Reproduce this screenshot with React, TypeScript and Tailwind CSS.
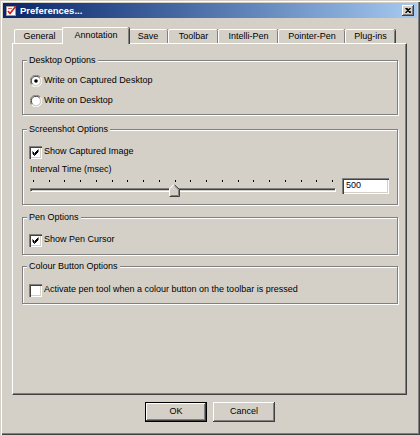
import React from "react";

const FONT = { fontFamily: '"Liberation Sans", Arial, sans-serif' };

function Radio({ checked }: { checked?: boolean }) {
  return (
    <svg width="12" height="12" viewBox="0 0 12 12" className="shrink-0">
      <path d="M10.5 2.2 A5 5 0 0 0 1.5 9.8" fill="none" stroke="#808080" strokeWidth="1" />
      <path d="M9.6 3 A3.9 3.9 0 0 0 2.4 9" fill="none" stroke="#404040" strokeWidth="1" />
      <path d="M1.5 9.8 A5 5 0 0 0 10.5 2.2" fill="none" stroke="#ffffff" strokeWidth="1" />
      <circle cx="6" cy="6" r="3.9" fill="#ffffff" />
      {checked && <circle cx="6" cy="6" r="1.8" fill="#000000" />}
    </svg>
  );
}

function Check({ checked }: { checked?: boolean }) {
  return (
    <div className="w-[13px] h-[13px] shrink-0 bg-white shadow-[inset_1px_1px_0_#808080,inset_2px_2px_0_#404040,inset_-1px_-1px_0_#ffffff,inset_-2px_-2px_0_#d4d0c8] flex items-center justify-center">
      {checked && (
        <svg width="7" height="7" viewBox="0 0 7 7">
          <path d="M0.5 2.5 L2.5 4.5 L6.5 0.5 M0.5 3.5 L2.5 5.5 L6.5 1.5 M0.5 4.5 L2.5 6.5 L6.5 2.5" stroke="#000" strokeWidth="1" fill="none" />
        </svg>
      )}
    </div>
  );
}

function Group({
  title,
  className,
  children,
}: {
  title: string;
  className: string;
  children?: React.ReactNode;
}) {
  return (
    <div
      className={
        "relative ml-[9px] w-[376px] border border-[#808080] shadow-[inset_1px_1px_0_#ffffff,1px_1px_0_#ffffff] " +
        className
      }
    >
      <span className="absolute -top-[7px] left-[4px] px-[2px] bg-[#d4d0c8] leading-[12px] text-[9px] text-black">
        {title}
      </span>
      {children}
    </div>
  );
}

const tabs = [
  { label: "General", w: "w-[50px]" },
  { label: "Annotation", w: "w-[63px]", active: true },
  { label: "Save", w: "w-[41px]" },
  { label: "Toolbar", w: "w-[50px]" },
  { label: "Intelli-Pen", w: "w-[60px]" },
  { label: "Pointer-Pen", w: "w-[67px]" },
  { label: "Plug-ins", w: "w-[50px]" },
];

export default function App() {
  const ticks = Array.from({ length: 20 }, (_, i) => 3 + i * 15.74);
  return (
    <div
      className="w-[420px] h-[435px] bg-[#d4d0c8] p-[3px] flex flex-col shadow-[inset_1px_1px_0_#d4d0c8,inset_2px_2px_0_#ffffff,inset_-1px_-1px_0_#404040,inset_-2px_-2px_0_#808080] text-black"
      style={FONT}
    >
      {/* Title bar */}
      <div className="h-[15px] flex items-center bg-gradient-to-r from-[#0a246a] to-[#a6caf0] pl-[3px] pr-[3px]">
        <svg width="11" height="11" viewBox="0 0 11 11" className="shrink-0">
          <rect x="0.5" y="1.5" width="9" height="9" fill="#ffffff" stroke="#9a9a9a" />
          <path d="M2 6 L4 8.5 L10 1" stroke="#d01818" strokeWidth="1.6" fill="none" />
          <path d="M2 3.5 H6" stroke="#e06060" strokeWidth="1" />
        </svg>
        <span className="ml-[3px] text-white font-bold text-[9.5px] leading-none">Preferences...</span>
        <div className="ml-auto w-[12px] h-[11px] bg-[#d4d0c8] shadow-[inset_-1px_-1px_0_#404040,inset_1px_1px_0_#ffffff,inset_-2px_-2px_0_#808080] flex items-center justify-center">
          <svg width="6" height="5" viewBox="0 0 6 5">
            <path d="M0.5 0 L5.5 5 M5.5 0 L0.5 5 M1.5 0 L6 4.5" stroke="#000" strokeWidth="1.2" fill="none" />
          </svg>
        </div>
      </div>

      {/* Tabs */}
      <div className="relative z-10 mt-[9px] ml-[9px] pl-[2px] h-[16px] flex items-end">
        {tabs.map((t) =>
          t.active ? (
            <div
              key={t.label}
              className={
                "relative z-10 -mx-[2px] -mb-[1px] h-[17px] w-[67px] bg-[#d4d0c8] rounded-t-[2px] border-t border-l border-white shadow-[inset_-1px_0_0_#808080,1px_0_0_#404040] flex items-center justify-center text-[9px] pb-[1px]"
              }
            >
              {t.label}
            </div>
          ) : (
            <div
              key={t.label}
              className={
                t.w +
                " h-[14px] bg-[#d4d0c8] rounded-t-[2px] border-t border-l border-white shadow-[inset_-1px_0_0_#808080,1px_0_0_#404040] flex items-center justify-center text-[9px] pt-[1px]"
              }
            >
              {t.label}
            </div>
          )
        )}
      </div>

      {/* Panel */}
      <div className="ml-[9px] w-[395px] h-[352px] border-l border-t border-white border-r border-b border-r-[#404040] border-b-[#404040] shadow-[inset_-1px_-1px_0_#808080] flex flex-col pt-[16px] text-[9px]">
        <Group title="Desktop Options" className="h-[55px] pt-[13px] pl-[7px]">
          <div className="h-[14px] flex items-center gap-[2px]">
            <Radio checked />
            <span>Write on Captured Desktop</span>
          </div>
          <div className="mt-[6px] h-[14px] flex items-center gap-[2px]">
            <Radio />
            <span>Write on Desktop</span>
          </div>
        </Group>

        <Group title="Screenshot Options" className="mt-[14px] h-[76px] pt-[15px] pl-[6px]">
          <div className="h-[14px] flex items-center gap-[2px]">
            <Check checked />
            <span>Show Captured Image</span>
          </div>
          <div className="mt-[4px] h-[14px] flex items-center pl-[1px]">Interval Time (msec)</div>
          <div className="mt-[2px] h-[18px] flex items-start">
            <div className="relative w-[306px] h-[18px] ml-[1px]">
              {ticks.map((x, i) => (
                <div
                  key={i}
                  className="absolute top-[1px] w-[1px] h-[2px] bg-[#000000]"
                  style={{ left: Math.round(x) }}
                />
              ))}
              <div className="absolute left-0 right-0 top-[9px] h-[4px] border-t border-l border-[#808080] border-b border-r border-b-white border-r-white shadow-[inset_1px_1px_0_#404040]" />
              <svg
                width="11"
                height="13"
                viewBox="0 0 11 13"
                className="absolute top-[5px]"
                style={{ left: 139 }}
              >
                <path d="M0.5 12.5 V5 L5 0.5 L5.5 0.5" fill="none" stroke="#ffffff" />
                <path d="M0.5 5 L5 0.5 L10 5.5 V12 H1 Z" fill="#d4d0c8" />
                <path d="M0.5 12.5 V5 L5 0.5" fill="none" stroke="#ffffff" />
                <path d="M5.5 0.8 L10.5 5.5 V12.5 H0.5" fill="none" stroke="#404040" />
                <path d="M5.5 2 L9.5 5.8 V11.5 H1.5" fill="none" stroke="#808080" />
              </svg>
            </div>
            <div className="ml-[6px] -mt-[1px] w-[47px] h-[16px] bg-white shadow-[inset_1px_1px_0_#808080,inset_2px_2px_0_#404040,inset_-1px_-1px_0_#ffffff,inset_-2px_-2px_0_#d4d0c8] flex items-center pl-[4px] text-[#000020]">
              500
            </div>
          </div>
        </Group>

        <Group title="Pen Options" className="mt-[12px] h-[38px] pt-[15px] pl-[6px]">
          <div className="h-[14px] flex items-center gap-[2px]">
            <Check checked />
            <span>Show Pen Cursor</span>
          </div>
        </Group>

        <Group title="Colour Button Options" className="mt-[11px] h-[38px] pt-[16px] pl-[6px]">
          <div className="h-[14px] flex items-center gap-[2px]">
            <Check />
            <span>Activate pen tool when a colour button on the toolbar is pressed</span>
          </div>
        </Group>
      </div>

      {/* Buttons */}
      <div className="mt-[7px] flex justify-center gap-[6px] text-[9px]">
        <div className="w-[62px] h-[20px] border border-black bg-[#d4d0c8] shadow-[inset_-1px_-1px_0_#404040,inset_1px_1px_0_#ffffff,inset_-2px_-2px_0_#808080] flex items-center justify-center">
          OK
        </div>
        <div className="w-[62px] h-[20px] bg-[#d4d0c8] shadow-[inset_-1px_-1px_0_#404040,inset_1px_1px_0_#ffffff,inset_-2px_-2px_0_#808080] flex items-center justify-center">
          Cancel
        </div>
      </div>
    </div>
  );
}
